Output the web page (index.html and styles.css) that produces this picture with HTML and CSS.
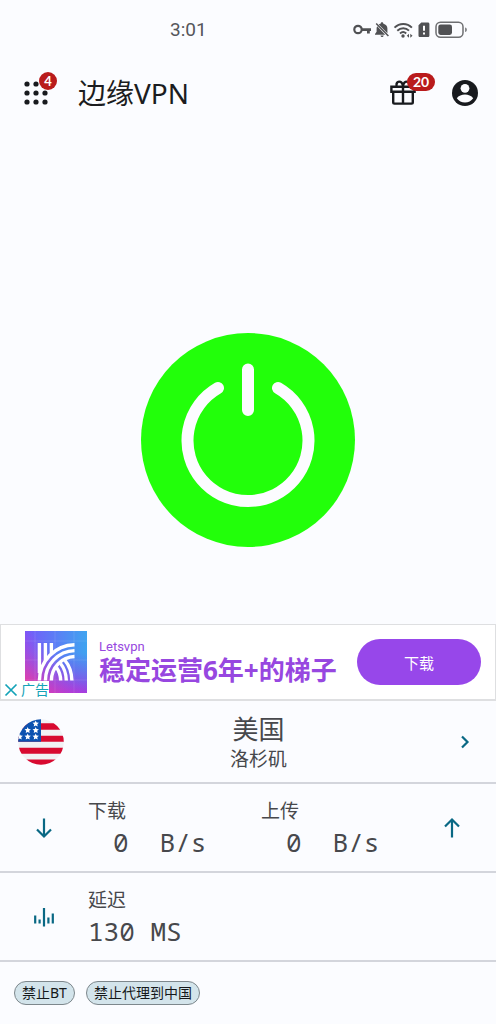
FILE: index.html
```html
<!DOCTYPE html>
<html lang="zh-CN">
<head>
<meta charset="utf-8">
<meta name="viewport" content="width=device-width, initial-scale=1">
<title>边缘VPN</title>
<link rel="stylesheet" href="styles.css">
</head>
<body>
<div class="status">
  <time class="clock">3:01</time>
  <svg class="status-icons" width="115" height="18" viewBox="0 0 115 18" fill="#505154" aria-hidden="true">
    <circle cx="5" cy="8.500" r="3.700" fill="none" stroke="#505154" stroke-width="2.200"/>
    <path d="M9 7.200h9v2.800h-1.200v2.600h-2.800V10H9z"/>
    <path d="M29 1.200c-.9 0-1.400.6-1.400 1.500-.7.200-1.300.5-1.800.9l8.600 8.600V7.500c0-2.400-1.400-4.200-4-4.800 0-.9-.5-1.500-1.400-1.500zM24.200 5.200c-.4.700-.6 1.500-.6 2.400v3.200L22 12.900v.8h10.200zM27.500 14.500h3.200c0 .9-.7 1.500-1.600 1.500s-1.600-.6-1.600-1.500z"/>
    <path d="M23.200 2.500l12.200 12.600" stroke="#505154" stroke-width="1.500"/>
    <path d="M41.500 6.700c5-5 12.600-5 17.400 0M44.300 9.700c3.400-3.300 8.400-3.300 11.700 0M47 12.500c1.800-1.700 4.400-1.700 6.200 0" fill="none" stroke="#505154" stroke-width="1.900"/>
    <circle cx="50" cy="15" r="1.700"/>
    <path d="M56 12.800v4L53.800 14.800zM57.300 12.800v4l2.200-2z"/>
    <path d="M65.500 4.200L68.300 1.500h6.500c1 0 1.600.7 1.600 1.600v11.300c0 1-.7 1.600-1.600 1.600h-7.700c-1 0-1.600-.7-1.600-1.600z"/>
    <path d="M71 4.800v5M71 11.500v2.100" stroke="#fff" stroke-width="2"/>
    <rect x="83" y="1.200" width="27" height="15" rx="4.500" fill="none" stroke="#6d6e71" stroke-width="1.500"/>
    <rect x="85.300" y="3.500" width="13.700" height="10.400" rx="2.300"/>
    <path d="M112.300 6.500c1.800 0 1.800 4.500 0 4.500z"/>
  </svg>
</div>
<header class="topbar">
  <button class="icon-btn" aria-label="应用">
    <svg width="26" height="26" viewBox="0 0 26 26" fill="#181a1e"><circle cx="4" cy="4" r="2.600"/><circle cx="13" cy="4" r="2.600"/><circle cx="22" cy="4" r="2.600"/><circle cx="4" cy="13" r="2.600"/><circle cx="13" cy="13" r="2.600"/><circle cx="22" cy="13" r="2.600"/><circle cx="4" cy="22" r="2.600"/><circle cx="13" cy="22" r="2.600"/><circle cx="22" cy="22" r="2.600"/></svg>
    <span class="badge badge-dot">4</span>
  </button>
  <h1 class="title">边缘VPN</h1>
  <button class="icon-btn gift" aria-label="礼物">
    <svg width="26" height="26" viewBox="0 0 26 26" fill="none" stroke="#181a1e" stroke-width="2.400"><path d="M1.400 6.700h23.200v5H1.400zM3.200 11.700v10.600q0 1.300 1.300 1.300h17q1.300 0 1.300-1.300V11.700M13 6.700v16.800"/><path d="M13 6C12 .2 5.600.2 6.600 6M13 6C14 .2 20.400.2 19.400 6"/></svg>
    <span class="badge">20</span>
  </button>
  <button class="icon-btn" aria-label="账户">
    <svg width="26" height="26" viewBox="0 0 26 26"><circle cx="13" cy="13" r="13" fill="#181a1e"/><circle cx="13" cy="8.300" r="4.400" fill="#fcfcff"/><path d="M4.800 18.200c1.800-2.600 5-3.800 8.200-3.800s6.400 1.200 8.200 3.800c-1.900 2.800-4.900 4.300-8.200 4.300s-6.300-1.500-8.200-4.300z" fill="#fcfcff"/></svg>
  </button>
</header>
<main class="stage">
  <button class="power" aria-label="连接">
    <svg width="214" height="214" viewBox="0 0 214 214" fill="none" stroke="#fcfcff" stroke-width="12" stroke-linecap="round"><circle cx="107" cy="107" r="107" fill="#22ff0a" stroke="none"/><path d="M107 36.500v40.500M77 55a60.500 60.500 0 1 0 60 0"/></svg>
  </button>
</main>
<section class="ad">
  <div class="ad-logo">
    <svg width="62" height="62" viewBox="0 0 62 62">
      <defs>
        <linearGradient id="sky" x1="0" y1="0" x2="1" y2="0"><stop offset="0" stop-color="#7658fa"/><stop offset="1" stop-color="#3fa4f0"/></linearGradient>
        <linearGradient id="rose" x1=".5" y1=".4" x2="0" y2=".9"><stop offset="0" stop-color="#c33fd8" stop-opacity="0"/><stop offset="1" stop-color="#ed3f9c"/></linearGradient>
        <linearGradient id="plum" x1="0" y1="0" x2="0" y2="1"><stop offset=".35" stop-color="#7a4cf0" stop-opacity="0"/><stop offset="1" stop-color="#a33be0"/></linearGradient>
      </defs>
      <path fill="url(#sky)" d="M0 0h62v62H0z"/><path fill="url(#plum)" d="M0 0h62v62H0z"/><path fill="url(#rose)" d="M0 0h62v62H0z"/>
      <path d="M0 10h62M0 29h62M0 49h62M10 0v62M30 0v62M49 0v62" stroke="#fff" stroke-opacity=".1"/>
      <g fill="none" stroke="#fff" stroke-width="3.400">
        <path d="M14.400 12v30M20.400 12v17M26.400 12v11"/>
        <path d="M31.500 36.500Q35.500 42 35.700 49.500M35.500 32.500Q41 39 41.300 49.500M40 29.500Q46.500 37 46.900 49.500"/>
        <path d="M14.400 49.500A36 36 0 0 1 49.500 13.700M20.400 49.500A30 30 0 0 1 49.500 19.600M26.400 49.500A24 24 0 0 1 49.500 25.500"/>
      </g>
    </svg>
    <span class="ad-mark"><svg width="14" height="14" viewBox="0 0 14 14" stroke="#14a3b8" stroke-width="1.700"><path d="M1.500 1.500l11 11M12.500 1.500l-11 11"/></svg>广告</span>
  </div>
  <div class="ad-copy">
    <div class="ad-brand">Letsvpn</div>
    <div class="ad-head">稳定运营6年+的梯子</div>
  </div>
  <button class="ad-cta">下载</button>
</section>
<button class="row region">
  <svg width="46" height="46" viewBox="0 0 46 46">
    <defs><clipPath id="disc"><circle cx="23" cy="23" r="22.800"/></clipPath></defs>
    <g clip-path="url(#disc)"><path fill="#f1f1f4" d="M0 0h46v46H0z"/><path fill="#d80a30" d="M0 4.300h46v6.400H0zM0 16.800h46v6H0zM0 28.800h46v6H0zM0 40.500h46v5.500H0z"/><path fill="#0c52b0" d="M0 0h23v22.800H0z"/>
    <g fill="#fff"><path id="star" d="M17.700 1.500l.9 2.100 2.300.2-1.700 1.500.5 2.300-2-1.200-2 1.200.5-2.300-1.700-1.500 2.300-.2z"/><use href="#star" x="-8" y="6.500"/><use href="#star" y="6.500"/><use href="#star" y="13"/><use href="#star" x="-8" y="13"/><use href="#star" x="-16" y="13"/></g></g>
  </svg>
  <span class="place"><span class="country">美国</span><span class="city">洛杉矶</span></span>
  <svg width="24" height="24" viewBox="0 0 24 24" fill="none" stroke="#096884" stroke-width="2.200"><path d="M9 6.500l5.500 5.500L9 17.500"/></svg>
</button>
<section class="row">
  <svg class="lead" width="24" height="24" viewBox="0 0 24 24" fill="none" stroke="#096884" stroke-width="2.200"><path d="M12 2.500v18M5 13.500l7 7 7-7"/></svg>
  <div class="stats">
    <div><div class="label">下载</div><div class="value speed"><span>0</span><span>B/s</span></div></div>
    <div><div class="label">上传</div><div class="value speed"><span>0</span><span>B/s</span></div></div>
  </div>
  <svg class="tail" width="24" height="24" viewBox="0 0 24 24" fill="none" stroke="#096884" stroke-width="2.200"><path d="M12 21.500v-18M5 10.500l7-7 7 7"/></svg>
</section>
<section class="row">
  <svg class="lead" width="24" height="24" viewBox="0 0 24 24" stroke="#096884" stroke-width="2.200"><path d="M3.200 10.500v8M7.600 14.500v4M12 3v18.500M16.400 12.500v6M20.800 8.500v10"/></svg>
  <div><div class="label">延迟</div><div class="value">130 MS</div></div>
</section>
<footer class="tags"><span class="tag">禁止BT</span><span class="tag">禁止代理到中国</span></footer>
</body>
</html>
```
FILE: styles.css
```css
* { box-sizing: border-box; }
body {
  margin: 0;
  min-height: 100vh;
  display: flex;
  flex-direction: column;
  background: #fbfcff;
  color: #47484c;
  font-family: "Noto Sans", "Noto Sans CJK SC", sans-serif;
}
button {
  border: 0;
  padding: 0;
  background: none;
  color: inherit;
  font-family: inherit;
  cursor: pointer;
}
svg { display: block; flex: none; }
.status {
  display: grid;
  grid-template-columns: 1fr auto;
  align-items: center;
  height: 60px;
  padding: 0 28px 0 170px;
}
.clock { font: 19px/24px Roboto, sans-serif; color: #55565a; }
.topbar {
  display: flex;
  align-items: center;
  height: 66px;
  padding: 0 18px 0 23px;
}
.icon-btn { position: relative; }
.title {
  flex: 1;
  margin: 0 0 0 29px;
  font-size: 28px;
  line-height: 40px;
  font-weight: 400;
  color: #1b1c20;
}
.gift { margin-right: 36px; }
.badge {
  position: absolute;
  top: -7px;
  left: 17px;
  min-width: 18px;
  padding: 0 6px;
  border-radius: 9px;
  background: #b91b1c;
  color: #fff;
  font: 700 14px/18px Lato, sans-serif;
}
.badge-dot { left: 16px; top: -8px; padding: 0; font-size: 13px; }
.stage {
  flex: 1;
  display: flex;
  align-items: center;
  justify-content: center;
  padding-top: 130px;
}
.power { border-radius: 50%; }
.ad {
  display: flex;
  align-items: center;
  height: 77px;
  padding: 0 14px 0 24px;
  border: 1px solid #dedfe1;
  border-bottom-width: 2px;
  background: #fff;
}
.ad-logo { position: relative; }
.ad-mark {
  position: absolute;
  left: -24px;
  bottom: -6px;
  display: flex;
  align-items: center;
  gap: 3px;
  padding: 0 0 0 3px;
  background: #fff;
  color: #14a3b8;
  font-size: 14px;
  line-height: 18px;
  white-space: nowrap;
}
.ad-copy { flex: 1; padding-left: 12px; color: #9747e0; white-space: nowrap; }
.ad-brand { font: 13px/16px Roboto, sans-serif; }
.ad-head { font-size: 26px; line-height: 30px; font-weight: 700; }
.ad-cta {
  width: 124px;
  height: 46px;
  border-radius: 23px;
  background: #9747ea;
  color: #fff;
  font-size: 15px;
}
.row {
  display: flex;
  align-items: center;
  width: 100%;
  height: 89px;
  border-bottom: 2px solid #d3d5dc;
}
.region { height: 83px; padding: 0 19px 0 18px; }
.place { flex: 1; display: flex; flex-direction: column; align-items: center; }
.country { font-size: 26px; line-height: 34px; }
.city { font-size: 19px; line-height: 26px; }
.lead { margin: 0 32px; }
.tail { margin-right: 32px; }
.stats { flex: 1; display: grid; grid-template-columns: 173px 1fr; }
.label { font-size: 19px; line-height: 28px; }
.value { font: 26px/34px "Noto Sans Mono", "Droid Sans Mono", "Noto Sans Mono CJK SC", monospace; }
.speed { display: flex; gap: 31px; padding-left: 25px; }
.tags {
  display: flex;
  gap: 11px;
  align-items: center;
  height: 62px;
  padding: 0 14px;
}
.tag {
  padding: 0 7px;
  border: 1px solid #7d878c;
  border-radius: 12px;
  background: #d3e4eb;
  color: #15181a;
  font-size: 14px;
  line-height: 22px;
}
```
